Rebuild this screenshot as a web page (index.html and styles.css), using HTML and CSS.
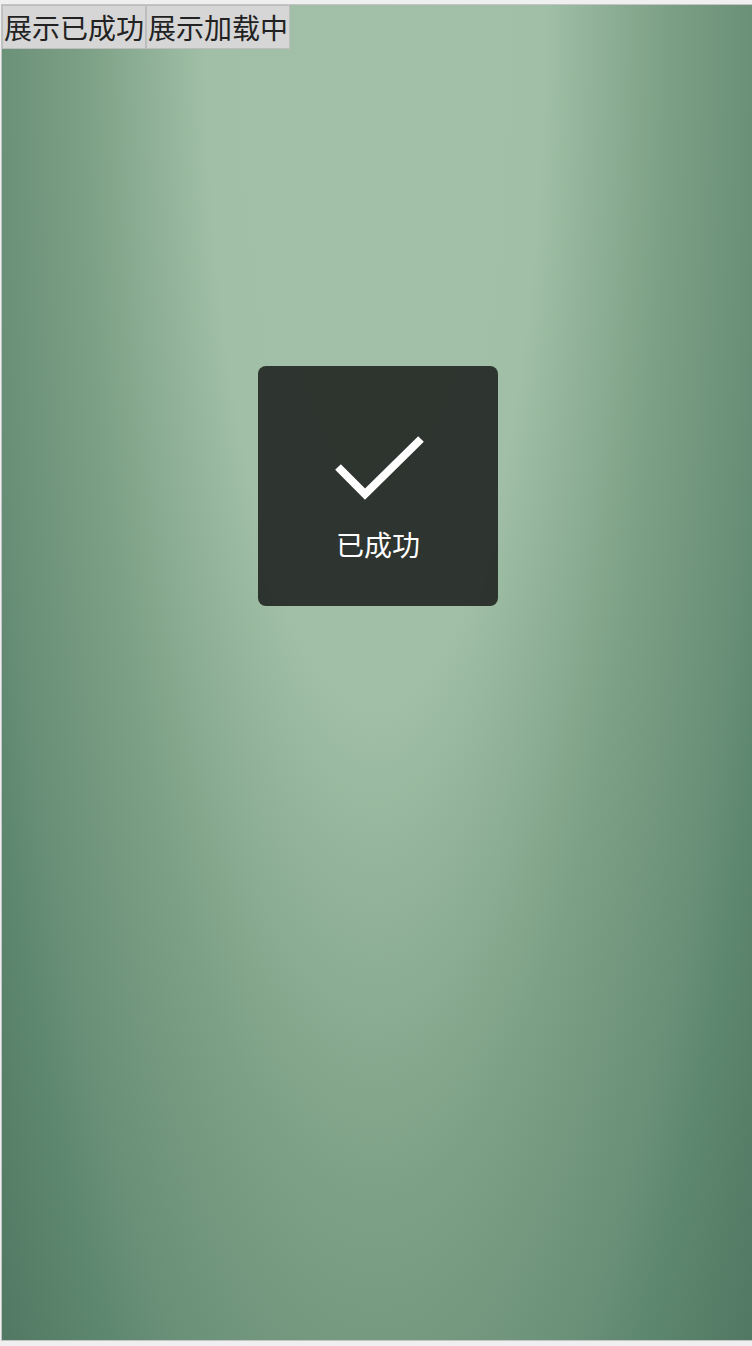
FILE: index.html
```html
<!DOCTYPE html>
<html lang="zh">
<head>
<meta charset="utf-8">
<title>Toast</title>
<link rel="stylesheet" href="styles.css">
</head>
<body>
<div class="stage">
  <div class="actions">
    <button class="btn" type="button">展示已成功</button><button class="btn" type="button">展示加载中</button>
  </div>
  <div class="toast">
    <svg class="toast-icon" width="96" height="70" viewBox="0 0 96 70" aria-hidden="true">
      <polyline points="7,33 34,60 90,5" fill="none" stroke="#ffffff" stroke-width="8" stroke-linecap="butt" stroke-linejoin="miter"/>
    </svg>
    <div class="toast-text">已成功</div>
  </div>
</div>
</body>
</html>
```
FILE: styles.css
```css
html, body {
  margin: 0;
  padding: 0;
  background: #efefef;
  overflow: hidden;
  height: 100%;
}

.stage {
  position: relative;
  margin: 4px 0 0 1px;
  width: 750px;
  height: 1335px;
  border: 1px solid #c4c4c4;
  border-right: none;
  background: radial-gradient(ellipse 513px 2115px at 373px 0,
    #a1c0a7 0%,
    #a0bfa6 33%,
    #7ca085 57%,
    #6a9078 74%,
    #5f8870 81%,
    #507862 97%,
    #4e7660 100%);
}

.actions {
  display: flex;
}

.btn {
  margin: 0;
  padding: 1px 1px;
  border: 1px solid #bdbdbd;
  background: #d6d6d6;
  color: #222222;
  font-family: "Noto Sans CJK SC", sans-serif;
  font-size: 28px;
  line-height: 40px;
  border-radius: 0;
}

.toast {
  position: absolute;
  left: 256px;
  top: 361px;
  width: 240px;
  height: 240px;
  box-sizing: border-box;
  padding-top: 68px;
  border-radius: 8px;
  background: rgba(17, 17, 17, 0.8);
  display: flex;
  flex-direction: column;
  align-items: center;
}

.toast-icon {
  display: block;
  margin-left: 2px;
}

.toast-text {
  margin-top: 20px;
  color: #ffffff;
  font-family: "Noto Sans CJK SC", sans-serif;
  font-size: 28px;
  line-height: 40px;
}
```
